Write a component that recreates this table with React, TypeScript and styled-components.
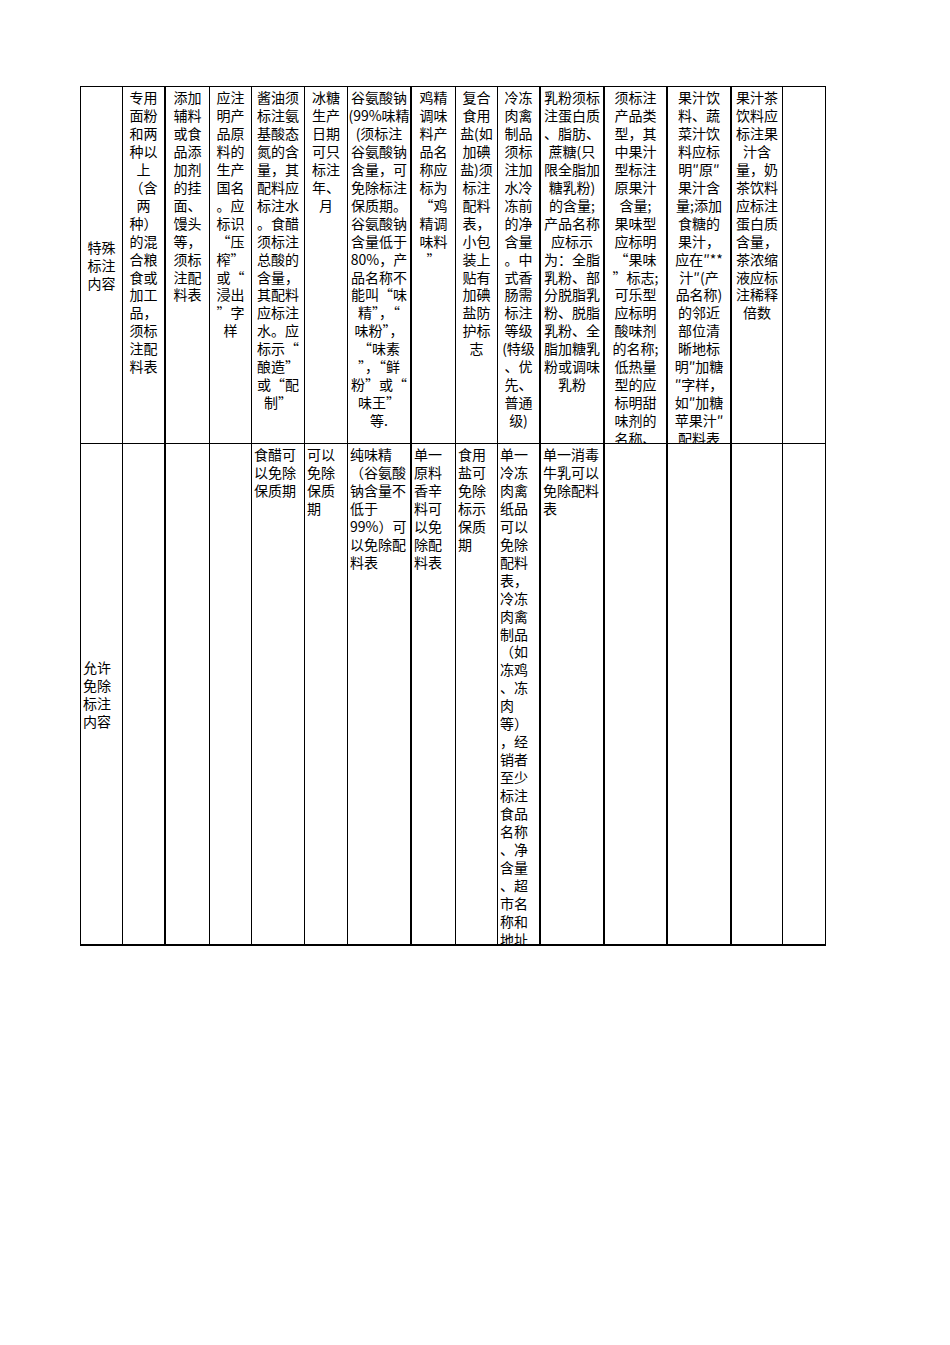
import styled, { createGlobalStyle } from 'styled-components';

// column widths taken from the grid lines of the sheet
const columnWidths = [42, 43, 44, 42, 53, 43, 64, 44, 42, 43, 64, 63, 64, 51, 43];
// columns whose right edge is drawn with the heavier rule
const heavyRight = [1, 6, 9, 10, 11, 12];

type Cell = string[];

const specialRow: Cell[] = [
    ['特殊', '标注', '内容'],
    ['专用', '面粉', '和两', '种以', '上', '（含', '两', '种）', '的混', '合粮', '食或', '加工', '品，', '须标', '注配', '料表'],
    ['添加', '辅料', '或食', '品添', '加剂', '的挂', '面、', '馒头', '等，', '须标', '注配', '料表'],
    ['应注', '明产', '品原', '料的', '生产', '国名', '。应', '标识', '“压', '榨”', '或“', '浸出', '”字', '样'],
    ['酱油须', '标注氨', '基酸态', '氮的含', '量，其', '配料应', '标注水', '。食醋', '须标注', '总酸的', '含量，', '其配料', '应标注', '水。应', '标示“', '酿造”', '或“配', '制”'],
    ['冰糖', '生产', '日期', '可只', '标注', '年、', '月'],
    ['谷氨酸钠', '(99%味精', '(须标注', '谷氨酸钠', '含量，可', '免除标注', '保质期。', '谷氨酸钠', '含量低于', '80%，产', '品名称不', '能叫“味', '精”，“', '味粉”，', '“味素', '”，“鲜', '粉”或“', '味王”', '等.'],
    ['鸡精', '调味', '料产', '品名', '称应', '标为', '“鸡', '精调', '味料', '”'],
    ['复合', '食用', '盐(如', '加碘', '盐)须', '标注', '配料', '表，', '小包', '装上', '贴有', '加碘', '盐防', '护标', '志'],
    ['冷冻', '肉禽', '制品', '须标', '注加', '水冷', '冻前', '的净', '含量', '。中', '式香', '肠需', '标注', '等级', '(特级', '、优', '先、', '普通', '级)'],
    ['乳粉须标', '注蛋白质', '、脂肪、', '蔗糖(只', '限全脂加', '糖乳粉)', '的含量;', '产品名称', '应标示', '为：全脂', '乳粉、部', '分脱脂乳', '粉、脱脂', '乳粉、全', '脂加糖乳', '粉或调味', '乳粉'],
    ['须标注', '产品类', '型，其', '中果汁', '型标注', '原果汁', '含量;', '果味型', '应标明', '“果味', '”标志;', '可乐型', '应标明', '酸味剂', '的名称;', '低热量', '型的应', '标明甜', '味剂的', '名称、'],
    ['果汁饮', '料、蔬', '菜汁饮', '料应标', '明″原″', '果汁含', '量;添加', '食糖的', '果汁，', '应在″**', '汁″(产', '品名称)', '的邻近', '部位清', '晰地标', '明″加糖', '″字样，', '如″加糖', '苹果汁″', '配料表'],
    ['果汁茶', '饮料应', '标注果', '汁含', '量，奶', '茶饮料', '应标注', '蛋白质', '含量，', '茶浓缩', '液应标', '注稀释', '倍数'],
    [],
];

const exemptRow: Cell[] = [
    ['允许', '免除', '标注', '内容'],
    [],
    [],
    [],
    ['食醋可', '以免除', '保质期'],
    ['可以', '免除', '保质', '期'],
    ['纯味精', '（谷氨酸', '钠含量不', '低于', '99%）可', '以免除配', '料表'],
    ['单一', '原料', '香辛', '料可', '以免', '除配', '料表'],
    ['食用', '盐可', '免除', '标示', '保质', '期'],
    ['单一', '冷冻', '肉禽', '纸品', '可以', '免除', '配料', '表，', '冷冻', '肉禽', '制品', '（如', '冻鸡', '、冻', '肉', '等）', '，经', '销者', '至少', '标注', '食品', '名称', '、净', '含量', '、超', '市名', '称和', '地址'],
    ['单一消毒', '牛乳可以', '免除配料', '表'],
    [],
    [],
    [],
    [],
];

const App = () => {
    return (
        <Page>
            <GlobalStyle />
            <Sheet>
                {specialRow.map((lines, i) => (
                    <TableCell
                        key={`s${i}`}
                        $heavy={heavyRight.includes(i)}
                        $align="center"
                        $middle={i === 0}
                    >
                        {lines.join('\n')}
                    </TableCell>
                ))}
                {exemptRow.map((lines, i) => (
                    <TableCell
                        key={`e${i}`}
                        $heavy={heavyRight.includes(i)}
                        $align="left"
                        $middle={i === 0}
                        $last
                    >
                        {lines.join('\n')}
                    </TableCell>
                ))}
            </Sheet>
        </Page>
    );
};

const GlobalStyle = createGlobalStyle`
    html, body {
        margin: 0;
        padding: 0;
        background: #ffffff;
    }
    body {
        font-family: "Noto Sans CJK SC", "Liberation Serif", serif;
        color: #000000;
    }
`;

const Page = styled.div`
    width: 950px;
    min-height: 1345px;
    padding: 86px 0 0 80px;
    box-sizing: border-box;
`;

const Sheet = styled.div`
    display: grid;
    grid-template-columns: ${columnWidths.map((w) => `${w}px`).join(' ')};
    grid-template-rows: 357px 502px;
    width: max-content;
    border-top: 1px solid #000;
    border-left: 1px solid #000;
`;

const TableCell = styled.div<{
    $heavy?: boolean;
    $align: 'left' | 'center';
    $middle?: boolean;
    $last?: boolean;
}>`
    box-sizing: border-box;
    overflow: hidden;
    white-space: pre;
    font-size: 14px;
    line-height: 17.95px;
    text-align: ${(p) => p.$align};
    padding: ${(p) => (p.$align === 'left' ? '2px 0 0 2px' : '2px 0 0 0')};
    border-right: ${(p) => (p.$heavy ? '2px' : '1px')} solid #000;
    border-bottom: ${(p) => (p.$last ? '2px' : '1px')} solid #000;
    display: flex;
    flex-direction: column;
    justify-content: ${(p) => (p.$middle ? 'center' : 'flex-start')};
`;

export default App;
